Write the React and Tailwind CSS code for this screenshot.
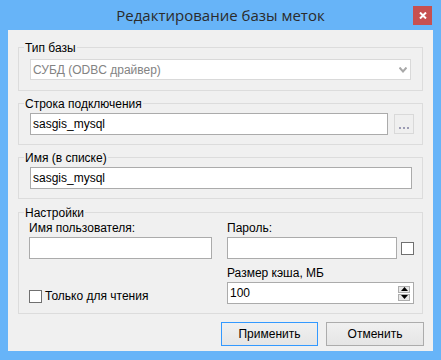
const font = { fontFamily: '"Liberation Sans", Arial, sans-serif' }

function GroupBox({ title, className, children }) {
  return (
    <div className={`relative border border-[#dcdcdc] ${className}`}>
      <span className="absolute left-[5px] top-[-7px] bg-[#f0f0f0] px-[1px] text-[12px] leading-[14px] text-black">
        {title}
      </span>
      {children}
    </div>
  )
}

function Edit({ value, className }) {
  return (
    <div className={`flex h-[22px] items-center border border-[#ababab] bg-white pl-[2px] text-[12px] leading-[14px] text-black ${className}`}>
      {value}
    </div>
  )
}

function Check({ className }) {
  return <div className={`h-[13px] w-[13px] border border-[#707070] bg-white ${className}`} />
}

export default function App() {
  return (
    <div className="flex h-[360px] w-[441px] flex-col bg-[#67b4f8]" style={font}>
      <div className="relative flex h-[30px] items-center justify-center">
        <span
          className="text-[15px] leading-[18px] text-[#2b2b2b]"
          style={{ fontFamily: '"Open Sans", "Noto Sans", sans-serif' }}
        >
          Редактирование базы меток
        </span>
        <div className="absolute right-[9px] top-[6px] flex h-[19px] w-[19px] items-center justify-center bg-[#c75050]">
          <svg width="8" height="7" viewBox="0 0 8 7">
            <path d="M1 0.5 L7 6.5 M7 0.5 L1 6.5" stroke="white" strokeWidth="2" />
          </svg>
        </div>
      </div>

      <div className="mx-[8px] h-[321px] bg-[#f0f0f0] px-[10px] pt-[17px]">
        <GroupBox title="Тип базы" className="h-[44px] w-[405px] pl-[11px] pt-[11px]">
          <div className="flex h-[21px] w-[381px] items-center justify-between border border-[#d9d9d9] bg-white pl-[2px] pr-[3px] text-[12px] leading-[14px] text-[#838383]">
            <span>СУБД (ODBC драйвер)</span>
            <svg width="8" height="6" viewBox="0 0 8 6">
              <path d="M0.5 0.5 L4 4.5 L7.5 0.5" fill="none" stroke="#a8a8a8" strokeWidth="2" />
            </svg>
          </div>
        </GroupBox>

        <GroupBox title="Строка подключения" className="mt-[12px] h-[42px] w-[405px] pl-[11px] pt-[9px]">
          <div className="flex items-start gap-[6px]">
            <Edit value="sasgis_mysql" className="w-[358px]" />
            <div className="mt-[1px] flex h-[20px] w-[20px] items-end justify-center border border-[#d9d9d9] bg-[#efefef] pb-[4px]">
              <svg width="10" height="2" viewBox="0 0 10 2">
                <rect x="0" y="0" width="2" height="2" fill="#9c9cb4" />
                <rect x="4" y="0" width="2" height="2" fill="#9c9cb4" />
                <rect x="8" y="0" width="2" height="2" fill="#9c9cb4" />
              </svg>
            </div>
          </div>
        </GroupBox>

        <GroupBox title="Имя (в списке)" className="mt-[12px] h-[42px] w-[405px] pl-[11px] pt-[9px]">
          <Edit value="sasgis_mysql" className="h-[21px] w-[382px]" />
        </GroupBox>

        <GroupBox title="Настройки" className="mt-[13px] h-[102px] w-[405px] pl-[10px] pt-[8px]">
          <div className="flex gap-[15px] text-[12px] leading-[14px] text-black">
            <div className="flex w-[183px] flex-col">
              <span>Имя пользователя:</span>
              <Edit value="" className="mt-[2px] w-[183px]" />
              <div className="mt-[30px] flex items-center gap-[3px]">
                <Check />
                <span>Только для чтения</span>
              </div>
            </div>
            <div className="flex flex-col">
              <span>Пароль:</span>
              <div className="mt-[2px] flex items-center gap-[4px]">
                <Edit value="" className="w-[170px]" />
                <Check />
              </div>
              <span className="mt-[7px]">Размер кэша, МБ</span>
              <div className="mt-[2px] flex h-[22px] w-[187px] items-center justify-between border border-[#ababab] bg-white pl-[2px] pr-[3px]">
                <span>100</span>
                <div className="flex flex-col gap-[1px]">
                  <div className="flex h-[7px] w-[12px] items-center justify-center border border-[#adadad] bg-[#e8e8e8]">
                    <svg width="7" height="4" viewBox="0 0 7 4">
                      <path d="M0 4 L3.5 0 L7 4 Z" fill="black" />
                    </svg>
                  </div>
                  <div className="flex h-[7px] w-[12px] items-center justify-center border border-[#adadad] bg-[#e8e8e8]">
                    <svg width="7" height="4" viewBox="0 0 7 4">
                      <path d="M0 0 L7 0 L3.5 4 Z" fill="black" />
                    </svg>
                  </div>
                </div>
              </div>
            </div>
          </div>
        </GroupBox>

        <div className="mt-[8px] flex w-[406px] justify-end gap-[8px] text-[12px] leading-[14px] text-black">
          <button className="flex h-[24px] w-[97px] items-center justify-center border border-[#3399ff] bg-gradient-to-b from-[#f0f0f0] to-[#e5e5e5]">
            Применить
          </button>
          <button className="flex h-[24px] w-[98px] items-center justify-center border border-[#acacac] bg-gradient-to-b from-[#f0f0f0] to-[#e5e5e5]">
            Отменить
          </button>
        </div>
      </div>
    </div>
  )
}
